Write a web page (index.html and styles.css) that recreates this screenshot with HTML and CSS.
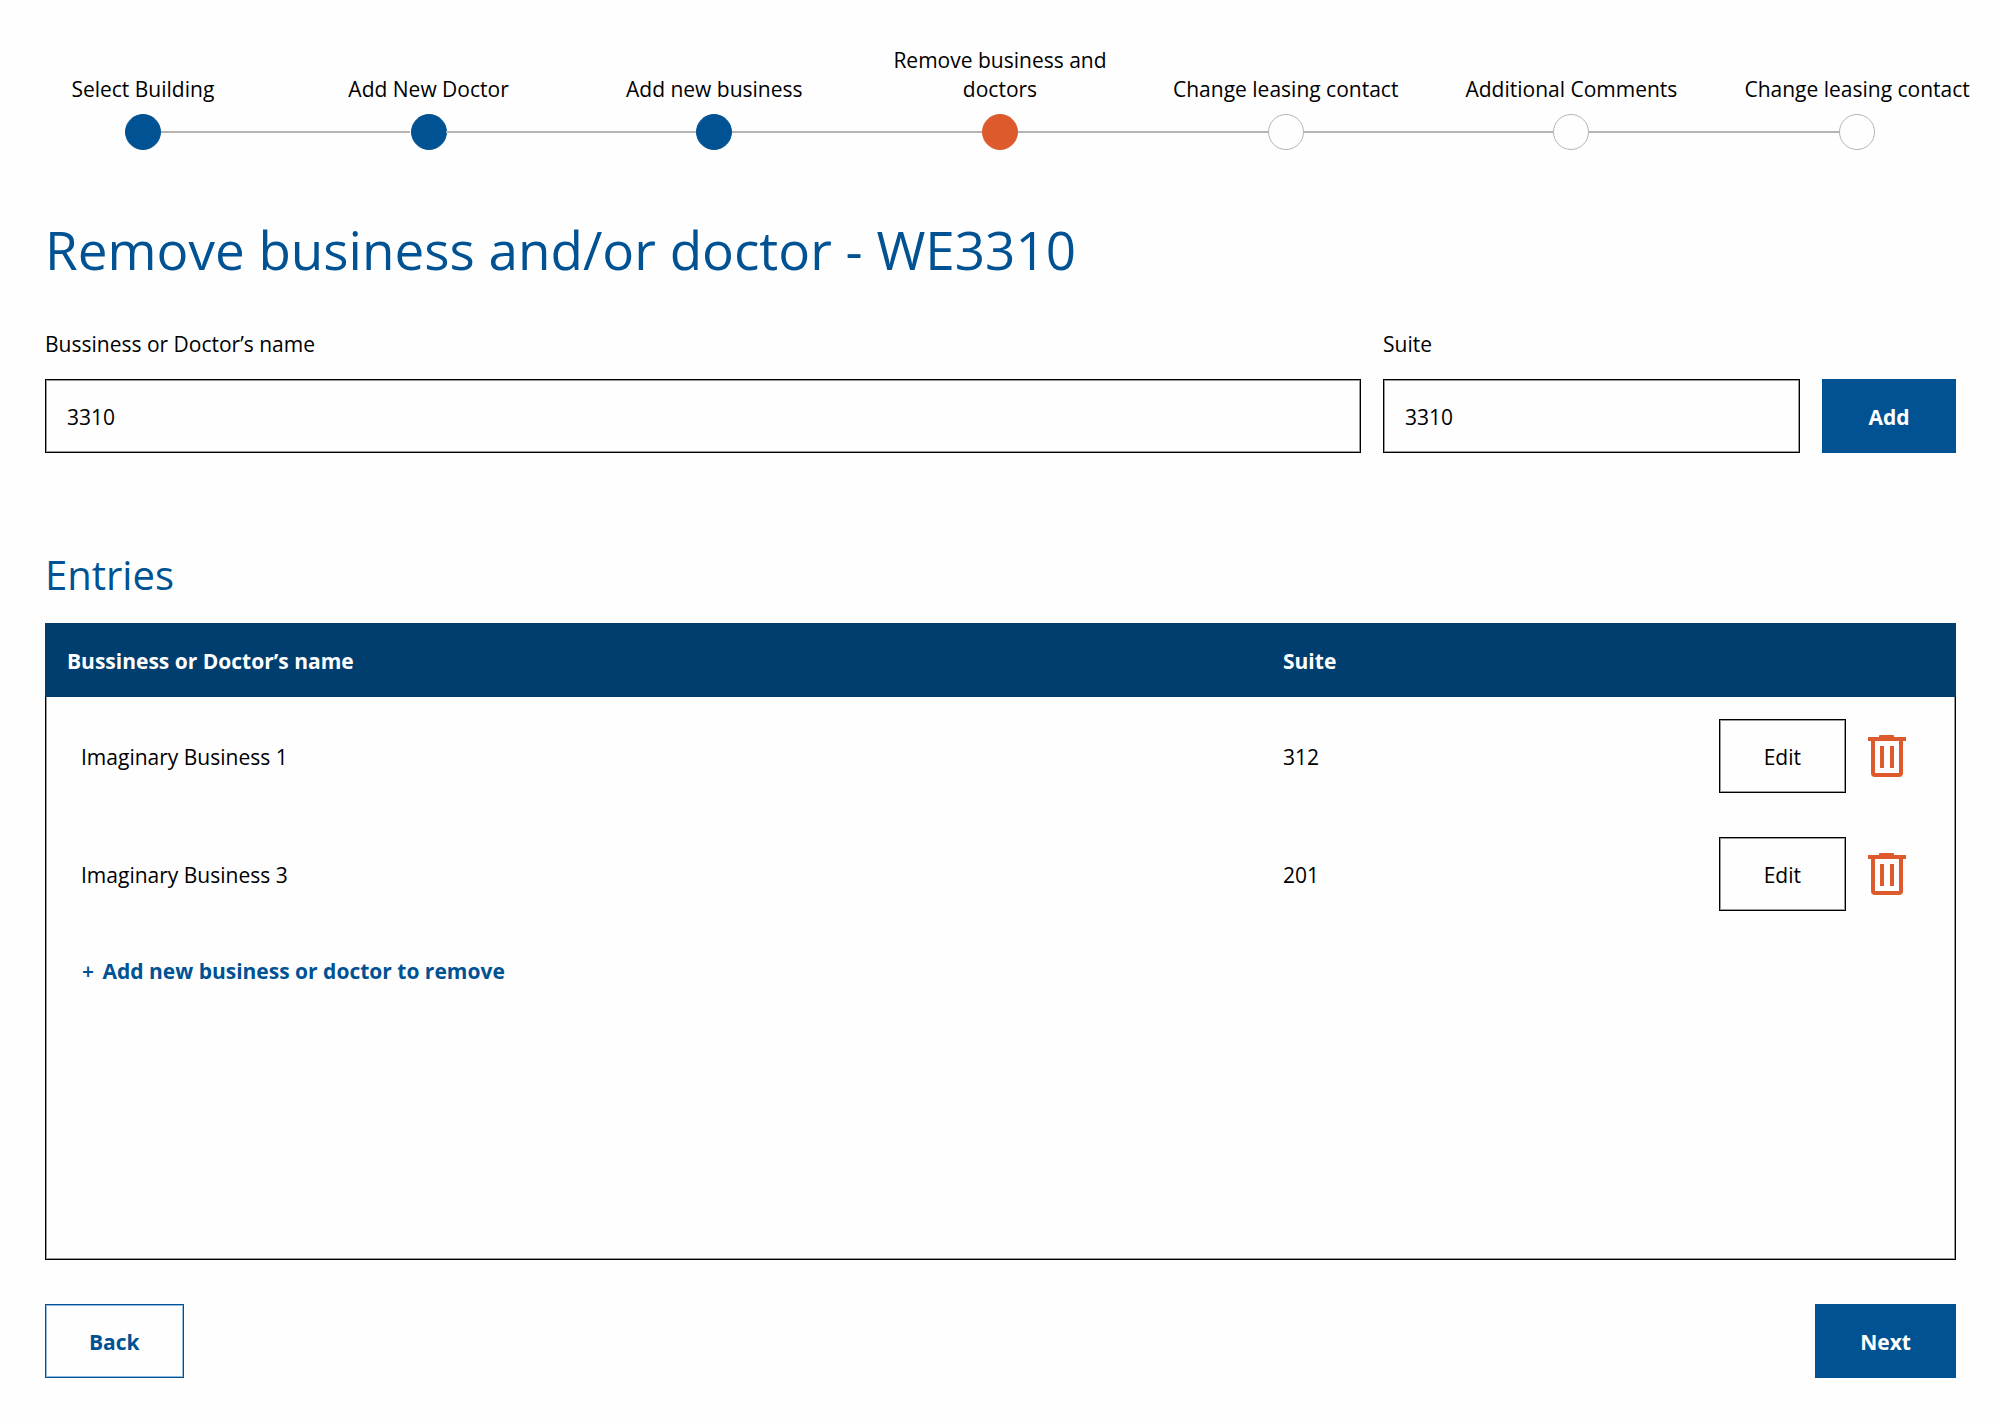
FILE: index.html
```html
<!DOCTYPE html>
<html lang="en">
<head>
  <meta charset="utf-8">
  <meta name="viewport" content="width=device-width, initial-scale=1">
  <title>Remove business and/or doctor</title>
  <link rel="stylesheet" href="styles.css">
</head>
<body>
  <nav aria-label="Progress">
    <ol class="steps">
      <li class="step step-done"><span class="step-label">Select Building</span><span class="step-dot"></span></li>
      <li class="step step-done"><span class="step-label">Add New Doctor</span><span class="step-dot"></span></li>
      <li class="step step-done"><span class="step-label">Add new business</span><span class="step-dot"></span></li>
      <li class="step step-current" aria-current="step"><span class="step-label">Remove business and doctors</span><span class="step-dot"></span></li>
      <li class="step"><span class="step-label">Change leasing contact</span><span class="step-dot"></span></li>
      <li class="step"><span class="step-label">Additional Comments</span><span class="step-dot"></span></li>
      <li class="step"><span class="step-label">Change leasing contact</span><span class="step-dot"></span></li>
    </ol>
  </nav>

  <main class="content">
    <h1 class="title">Remove business and/or doctor - WE3310</h1>

    <form class="entry-form">
      <div class="field">
        <label for="name">Bussiness or Doctor’s name</label>
        <input class="input" id="name" type="text" value="3310">
      </div>
      <div class="field">
        <label for="suite">Suite</label>
        <input class="input" id="suite" type="text" value="3310">
      </div>
      <button class="button button-primary" type="button">Add</button>
    </form>

    <h2 class="subtitle">Entries</h2>
    <section class="entries">
      <table class="table">
        <thead>
          <tr><th class="col-name" scope="col">Bussiness or Doctor’s name</th><th class="col-suite" scope="col">Suite</th><td class="col-actions"></td></tr>
        </thead>
        <tbody>
          <tr>
            <td class="col-name">Imaginary Business 1</td>
            <td class="col-suite">312</td>
            <td class="col-actions">
              <div class="actions">
                <button class="button button-plain" type="button">Edit</button>
                <button class="icon-button" type="button" aria-label="Delete Imaginary Business 1">
                  <svg class="trash" viewBox="0 0 38 42" aria-hidden="true"><path fill-rule="evenodd" d="M11 2V1q0-1 1-1h13q1 0 1 1v1h12v4h-3v32q0 4-4 4H7q-4 0-4-4V6H0V2zM7 6v32h24V6z"/><path d="M12 11h4v22h-4zM22 11h4v22h-4z"/></svg>
                </button>
              </div>
            </td>
          </tr>
          <tr>
            <td class="col-name">Imaginary Business 3</td>
            <td class="col-suite">201</td>
            <td class="col-actions">
              <div class="actions">
                <button class="button button-plain" type="button">Edit</button>
                <button class="icon-button" type="button" aria-label="Delete Imaginary Business 3">
                  <svg class="trash" viewBox="0 0 38 42" aria-hidden="true"><path fill-rule="evenodd" d="M11 2V1q0-1 1-1h13q1 0 1 1v1h12v4h-3v32q0 4-4 4H7q-4 0-4-4V6H0V2zM7 6v32h24V6z"/><path d="M12 11h4v22h-4zM22 11h4v22h-4z"/></svg>
                </button>
              </div>
            </td>
          </tr>
        </tbody>
      </table>
      <a class="add-link" href="#name"><span class="plus">+</span> Add new business or doctor to remove</a>
    </section>

    <div class="footer">
      <button class="button button-outline" type="button">Back</button>
      <button class="button button-primary" type="button">Next</button>
    </div>
  </main>
</body>
</html>
```
FILE: styles.css
```css
:root {
  --blue: #005293;
  --navy: #003e6f;
  --orange: #dd5a2c;
  --grey: #b4b4b4;
}

* {
  box-sizing: border-box;
}

body {
  margin: 0;
  background: #fefefe;
  color: #000;
  font-family: "Segoe UI", "Open Sans", "Noto Sans", sans-serif;
  font-size: 21px;
  line-height: 29px;
}

/* Progress steps */
.steps {
  display: grid;
  grid-template-columns: repeat(7, 1fr);
  margin: 0;
  padding: 46px 0 0;
  list-style: none;
}

.step {
  display: flex;
  flex-direction: column;
  align-items: center;
  justify-content: flex-end;
  gap: 10px;
  text-align: center;
}

.step-label {
  max-width: 240px;
}

/* The dot sits between the two halves of the connecting line */
.step-dot {
  width: 36px;
  height: 36px;
  border: 1px solid var(--grey);
  border-radius: 50%;
}

.step::after {
  content: "";
  width: 100%;
  height: 2px;
  margin: -29px 0 17px;
  background: linear-gradient(90deg, var(--grey) calc(50% - 18px), transparent calc(50% - 18px), transparent calc(50% + 18px), var(--grey) calc(50% + 18px));
}

.step:first-child::after {
  background: linear-gradient(90deg, transparent calc(50% + 18px), var(--grey) calc(50% + 18px));
}

.step:last-child::after {
  background: linear-gradient(90deg, var(--grey) calc(50% - 18px), transparent calc(50% - 18px));
}

.step-done .step-dot {
  border-color: var(--blue);
  background: var(--blue);
}

.step-current .step-dot {
  border-color: var(--orange);
  background: var(--orange);
}

/* Page content */
.content {
  padding: 62px 44px 44px 45px;
}

.title,
.subtitle {
  margin: 0;
  color: var(--blue);
  font-weight: 400;
}

.title {
  font-size: 53px;
  line-height: 76px;
}

.subtitle {
  margin: 92px 0 18px;
  font-size: 40px;
  line-height: 60px;
}

.entry-form {
  display: grid;
  grid-template-columns: 1fr 417px 134px;
  align-items: end;
  gap: 22px;
  margin-top: 42px;
}

.field {
  display: flex;
  flex-direction: column;
  gap: 20px;
}

.input {
  width: 100%;
  height: 74px;
  padding: 2px 21px 0;
  border: 1px solid #000;
  border-radius: 0;
  background: transparent;
  box-shadow: inset 0 0 0 1px #999;
  color: inherit;
  font: inherit;
}

.button {
  height: 74px;
  padding: 2px 44px 0;
  border: 1px solid var(--blue);
  font: inherit;
  font-weight: 700;
}

.button-primary {
  background: var(--blue);
  color: #fff;
}

.button-outline {
  padding: 2px 43px 0;
  background: transparent;
  box-shadow: inset 0 0 0 1px #8fbbe0;
  color: var(--blue);
}

.button-plain {
  border-color: #000;
  background: transparent;
  box-shadow: inset 0 0 0 1px #999;
  color: #000;
  font-weight: 400;
}

.entries {
  min-height: 637px;
  border: 1px solid #000;
  border-top: 0;
  box-shadow: inset 0 0 0 1px #999;
}

.table {
  width: 100%;
  border-spacing: 0;
  table-layout: fixed;
  text-align: left;
}

.table thead {
  background: var(--navy);
  color: #fff;
  box-shadow: -1px 0 var(--navy), 1px 0 var(--navy);
}

.table th,
.table td {
  height: 74px;
  padding: 2px 0 0;
}

.table tbody td {
  height: 118px;
}

.table .col-name {
  padding-left: 35px;
}

.table th.col-name {
  padding-left: 21px;
}

.table .col-suite,
.table .col-actions {
  width: 336px;
}

.table .col-actions {
  padding-top: 0;
}

.actions {
  display: flex;
  align-items: center;
  justify-content: flex-end;
  gap: 22px;
  padding-right: 49px;
}

.icon-button {
  display: flex;
  padding: 0;
  border: 0;
  background: transparent;
}

.trash {
  width: 38px;
  height: 42px;
  fill: var(--orange);
}

.add-link {
  display: inline-block;
  margin: 24px 36px;
  color: var(--blue);
  font-weight: 700;
  text-decoration: none;
}

.plus {
  margin-right: 3px;
  font-weight: 600;
}

.footer {
  display: flex;
  justify-content: space-between;
  margin-top: 44px;
}
```
